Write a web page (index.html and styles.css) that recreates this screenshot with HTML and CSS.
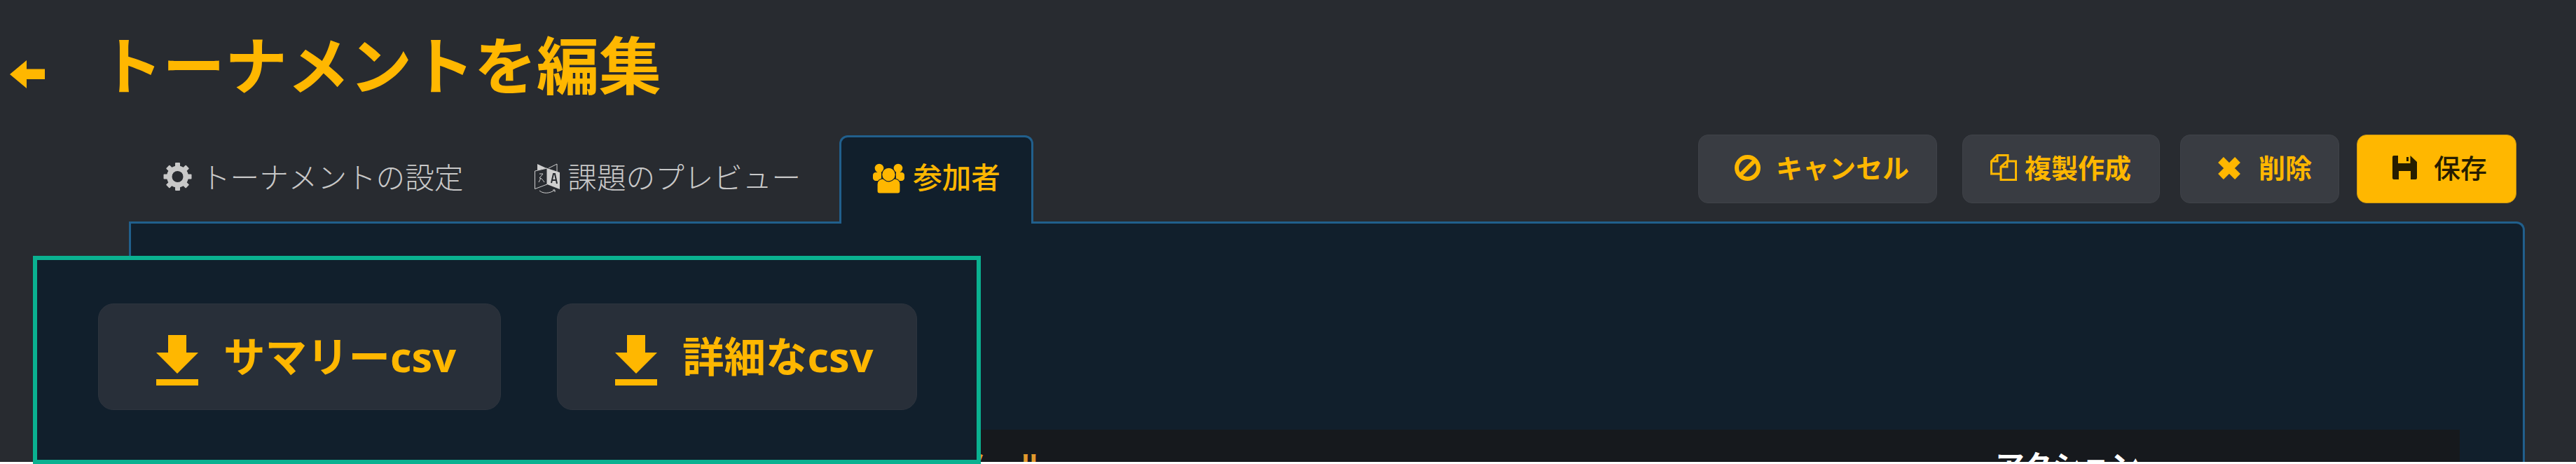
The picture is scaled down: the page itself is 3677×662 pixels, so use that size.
FILE: index.html
```html
<!DOCTYPE html>
<html lang="ja">
<head>
<meta charset="utf-8">
<title>トーナメントを編集</title>
<link rel="stylesheet" href="styles.css">
</head>
<body>
<div class="page">
  <header class="title-bar">
    <svg class="back-icon" viewBox="0 0 50 40"><path d="M0 20 24 0V12.5H50V27H24V40Z"/></svg>
    <h1 class="title">トーナメントを編集</h1>
  </header>
  <div class="toolbar">
    <nav class="tabs">
      <a class="tab">
        <svg class="tab-icon gear" viewBox="0 0 41 40">
          <g fill="#c8c8c8">
            <rect x="17" y="0" width="7" height="40" rx="1"/>
            <rect x="17" y="0" width="7" height="40" rx="1" transform="rotate(45 20.5 20)"/>
            <rect x="17" y="0" width="7" height="40" rx="1" transform="rotate(90 20.5 20)"/>
            <rect x="17" y="0" width="7" height="40" rx="1" transform="rotate(135 20.5 20)"/>
          </g>
          <circle cx="20.5" cy="20" r="8" fill="#282b30"/>
          <circle cx="20.5" cy="20" r="12" fill="none" stroke="#c8c8c8" stroke-width="7"/>
        </svg>
        <span>トーナメントの設定</span>
      </a>
      <a class="tab">
        <svg class="tab-icon book" viewBox="0 0 37 43">
          <path d="M4 1 17 7 4 10Z" fill="#cfcfcf"/>
          <path d="M18 7 36 13V37L18 30Z" fill="#cfcfcf"/>
          <path d="M20 7 32 1V12" fill="none" stroke="#cfcfcf" stroke-width="1"/>
          <path d="M.5 11 18 7V30L.5 36.5Z" fill="none" stroke="#cfcfcf" stroke-width="1"/>
          <path d="M7 15h5l-5 6c3 0 5 3 7 6M9 21l-3 6" fill="none" stroke="#cfcfcf" stroke-width="1"/>
          <path d="M24 28 27 15h2l3 14M25 24h6" fill="none" stroke="#26292e" stroke-width="2"/>
          <path d="M7 39c6 5 15 4 22-1M29 38h-3M29 38v3" fill="none" stroke="#cfcfcf" stroke-width="1"/>
        </svg>
        <span>課題のプレビュー</span>
      </a>
      <a class="tab tab-active">
        <svg class="tab-icon users" viewBox="0 0 45 43">
          <circle cx="9" cy="7" r="6.3"/>
          <circle cx="36" cy="7" r="6.3"/>
          <path d="M0 17c0-2.500 2-4 4-4h8v12H4c-2 0-4-2-4-4ZM45 17c0-2.500-2-4-4-4h-8v12h8c2 0 4-2 4-4Z"/>
          <path class="users-front" d="M6 38V30c0-5 4-8 8-8h17c4 0 8 3 8 8v10c0 2-1 3-3 3H9c-2 0-3-1-3-3Z"/>
          <circle class="users-front" cx="22.500" cy="16" r="9.800"/>
        </svg>
        <span>参加者</span>
      </a>
    </nav>
    <div class="actions">
      <button class="btn btn-cancel">
        <svg class="btn-icon" viewBox="0 0 37 37"><circle cx="18.500" cy="18.500" r="15.500" fill="none" stroke="#ffb700" stroke-width="6"/><path d="M8 29 29 8" stroke="#ffb700" stroke-width="6"/></svg>
        <span>キャンセル</span>
      </button>
      <button class="btn btn-copy">
        <svg class="btn-icon" viewBox="0 0 38 38" fill="none" stroke="#ffb700" stroke-width="3"><path d="M25 10V1.500H10L1.500 10V28H14M10 1.500V10H1.500"/><path d="M24 10H36.500V36.500H15V18L24 10V18H15"/></svg>
        <span>複製作成</span>
      </button>
      <button class="btn btn-delete">
        <svg class="btn-icon" viewBox="0 0 32 32"><path d="M4 4 28 28M28 4 4 28" stroke="#ffb700" stroke-width="11"/></svg>
        <span>削除</span>
      </button>
      <button class="btn btn-save">
        <svg class="btn-icon" viewBox="0 0 35 34"><path fill="#261d00" d="M2 0H8V11H25.500V0L35 9V32A2 2 0 0 1 33 34H26V22H9V34H2A2 2 0 0 1 0 32V2A2 2 0 0 1 2 0Z"/><rect x="20" y="2" width="3" height="6" fill="#261d00"/></svg>
        <span>保存</span>
      </button>
    </div>
  </div>
  <main class="panel">
    <div class="table-head">
      <span></span>
      <span class="col-sort">メール</span>
      <span class="col-action">アクション</span>
    </div>
  </main>
</div>
<section class="download-box">
  <button class="dl-btn dl-summary">
    <svg class="dl-icon" viewBox="0 0 60 72"><path d="M17 0H43V25H60L30 55 0 25H17ZM0 63H60V72H0Z"/></svg>
    <span>サマリーcsv</span>
  </button>
  <button class="dl-btn dl-detail">
    <svg class="dl-icon" viewBox="0 0 60 72"><path d="M17 0H43V25H60L30 55 0 25H17ZM0 63H60V72H0Z"/></svg>
    <span>詳細なcsv</span>
  </button>
</section>
</body>
</html>
```
FILE: styles.css
```css
* { box-sizing: border-box; }
html { background: #fff; }
body {
  margin: 0;
  height: 662px;
  overflow: hidden;
  position: relative;
  font-family: "Open Sans", "Noto Sans CJK JP", sans-serif;
}
.page {
  height: 659px;
  overflow: hidden;
  background: #282b30;
}
.title-bar {
  height: 193px;
  display: flex;
  align-items: center;
  padding: 0 0 16px 14px;
}
.back-icon { width: 50px; height: 40px; fill: #ffb700; margin-top: 35px; }
.title {
  margin: 0 0 0 79px;
  font-family: "Noto Sans CJK JP", sans-serif;
  font-size: 89px;
  line-height: 120px;
  font-weight: 700;
  color: #ffb700;
  white-space: nowrap;
}
.toolbar {
  display: flex;
  justify-content: space-between;
  align-items: flex-start;
  padding: 0 85px 0 185px;
  height: 126px;
  margin-bottom: -3px;
  position: relative;
  z-index: 1;
}
.tabs { display: flex; gap: 6px; }
.tab {
  height: 126px;
  display: flex;
  align-items: flex-start;
  gap: 13px;
  padding: 31px 45px 0;
  border: 3px solid transparent;
  border-bottom: 0;
  font-family: "Noto Sans CJK JP", sans-serif;
  font-size: 41.6px;
  line-height: 48px;
  font-weight: 300;
  color: #c8c8c8;
  white-space: nowrap;
}
.tab-active {
  background: #111f2c;
  border-color: #215f8c;
  border-radius: 12px 12px 0 0;
  color: #ffb700;
  font-weight: 500;
  gap: 12px;
  margin-left: 1px;
  padding-right: 44px;
}
.tab-icon { flex: none; }
.gear { width: 41px; height: 40px; margin-top: 5px; }
.book { width: 37px; height: 43px; margin: 6px -3px 0 0; }
.users { width: 45px; height: 43px; fill: #ffb700; margin-top: 6px; }
.users-front { stroke: #111f2c; stroke-width: 1.200; }
.actions { display: flex; align-items: flex-start; margin-top: -1px; }
.btn {
  height: 98px;
  display: flex;
  align-items: center;
  border: 1px solid #3f4248;
  border-radius: 14px;
  background: #393c42;
  color: #ffb700;
  font-family: "Noto Sans CJK JP", sans-serif;
  font-size: 38px;
  line-height: 48px;
  font-weight: 700;
  white-space: nowrap;
  padding: 0;
}
.btn-cancel { width: 341px; padding-left: 51px; gap: 22px; }
.btn-copy { width: 282px; padding-left: 39px; gap: 11px; margin-left: 36px; }
.btn-delete { width: 227px; padding-left: 53px; gap: 26px; margin-left: 29px; }
.btn-save {
  width: 228px;
  padding-left: 50px;
  gap: 24px;
  margin-left: 25px;
  background: #ffb700;
  border-color: #c99512;
  color: #261d00;
  font-weight: 500;
}
.btn-icon { flex: none; }
.btn-cancel .btn-icon { width: 37px; height: 37px; margin-top: -4px; }
.btn-copy .btn-icon { width: 38px; height: 38px; margin-top: -4px; }
.btn-delete .btn-icon { width: 32px; height: 32px; margin-top: -2px; }
.btn-save .btn-icon { width: 35px; height: 34px; margin-top: -4px; }
.btn span { margin-top: -6px; }
.panel {
  height: 343px;
  margin: 0 73px 0 184px;
  padding: 294px 90px 0;
  background: #111f2c;
  border: 3px solid #215f8c;
  border-bottom: 0;
  border-radius: 0 12px 0 0;
}
.table-head {
  height: 60px;
  background: #16191d;
  display: grid;
  grid-template-columns: 1091px 1480px 1fr;
  padding-top: 25px;
  font-family: "Noto Sans CJK JP", sans-serif;
  font-size: 41.6px;
  line-height: 48px;
  font-weight: 700;
}
.col-sort { color: #e39a2d; }
.col-action { color: #fff; }
.download-box {
  position: absolute;
  left: 47px;
  top: 365px;
  width: 1353px;
  height: 297px;
  border: 6px solid #0ab190;
  background: #111f2c;
  display: flex;
  gap: 80px;
  align-items: flex-start;
  padding: 62px 0 0 87px;
}
.dl-btn {
  height: 152px;
  display: flex;
  align-items: center;
  gap: 36px;
  padding: 0 0 0 82px;
  background: #282f39;
  border: 1px solid #2d343e;
  border-radius: 22px;
  color: #ffb700;
  font-family: "Open Sans", "Noto Sans CJK JP", sans-serif;
  font-size: 59.5px;
  line-height: 72px;
  font-weight: 700;
  white-space: nowrap;
}
.dl-btn span { margin-top: -3px; }
.dl-summary { width: 575px; }
.dl-detail { width: 514px; }
.dl-icon { width: 60px; height: 72px; fill: #ffb700; flex: none; margin-top: 10px; }
```
